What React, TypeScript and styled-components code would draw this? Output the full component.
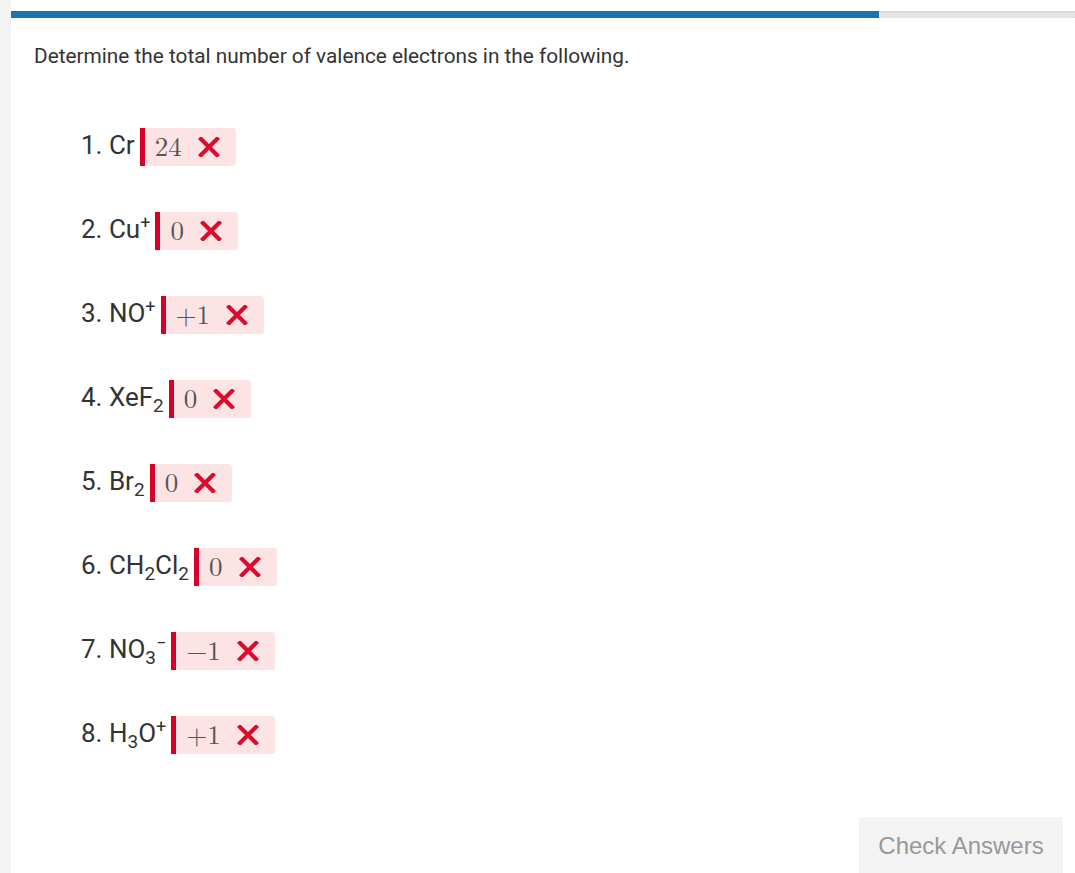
import React from 'react';
import styled, { createGlobalStyle } from 'styled-components';

const GlobalStyle = createGlobalStyle`
  html, body {
    margin: 0;
    padding: 0;
    background: #ffffff;
  }
  body {
    font-family: Roboto, 'Liberation Sans', Arial, sans-serif;
    color: #333333;
  }
`;

const Page = styled.div`
  display: flex;
  min-height: 873px;
  overflow: hidden;
`;

const SideStrip = styled.div`
  width: 11px;
  flex-shrink: 0;
  background: #f4f4f4;
`;

const Main = styled.div`
  flex: 1;
  padding-top: 11px;
  display: flex;
  flex-direction: column;
`;

const ProgressTrack = styled.div`
  height: 7px;
  background: #e6e6e6;
  box-shadow: inset 0 1px 2px rgba(0, 0, 0, 0.08);
  display: flex;
`;

const ProgressFill = styled.div`
  height: 100%;
  background: #1a75ae;
`;

const Content = styled.div`
  padding: 0 12px 0 23px;
  display: flex;
  flex-direction: column;
`;

const Prompt = styled.p`
  margin: 26px 0 0;
  font-size: 20.8px;
  line-height: 24px;
  color: #333333;
`;

const QuestionList = styled.ol`
  list-style: none;
  margin: 60px 0 0;
  padding: 0 0 0 47px;
  display: flex;
  flex-direction: column;
  gap: 46px;
`;

const Row = styled.li`
  display: flex;
  align-items: center;
  height: 38px;
`;

const Label = styled.span`
  font-size: 26px;
  line-height: 30px;
  color: #333333;
  margin-top: -5px;
  margin-right: 5px;

  sup {
    font-size: 18px;
    vertical-align: 9px;
    line-height: 0;
  }

  sub {
    font-size: 19px;
    vertical-align: -6px;
    line-height: 0;
  }
`;

const AnswerBox = styled.span`
  display: flex;
  align-items: center;
  height: 38px;
  background: #fce4e4;
  border-left: 5px solid #d6002a;
  border-radius: 0 3px 3px 0;
  padding: 0 16px 0 10px;
`;

const Value = styled.span`
  font-family: 'Latin Modern Math', 'Liberation Serif', 'Times New Roman', serif;
  font-size: 27px;
  line-height: 1;
  color: #555555;
  margin-right: 16px;
`;

const Cross = () => (
  <svg width="22" height="20" viewBox="0 0 22 20" aria-hidden="true">
    <path
      d="M3 2 L19 18 M19 2 L3 18"
      stroke="#dc0a2d"
      strokeWidth="4.2"
      strokeLinecap="square"
      fill="none"
    />
  </svg>
);

const Footer = styled.div`
  margin-top: 63px;
  display: flex;
  justify-content: flex-end;
`;

const CheckButton = styled.button`
  width: 204px;
  height: 60px;
  padding: 0 0 2px;
  border: none;
  border-radius: 3px;
  background: #f3f3f3;
  color: #999999;
  font-family: 'Liberation Sans', Arial, sans-serif;
  font-size: 24px;
  cursor: default;
`;

type Question = {
  label: React.ReactNode;
  value: string;
};

const questions: Question[] = [
  { label: <>1. Cr</>, value: '24' },
  { label: <>2. Cu<sup>+</sup></>, value: '0' },
  { label: <>3. NO<sup>+</sup></>, value: '+1' },
  { label: <>4. XeF<sub>2</sub></>, value: '0' },
  { label: <>5. Br<sub>2</sub></>, value: '0' },
  { label: <>6. CH<sub>2</sub>Cl<sub>2</sub></>, value: '0' },
  { label: <>7. NO<sub>3</sub><sup>−</sup></>, value: '−1' },
  { label: <>8. H<sub>3</sub>O<sup>+</sup></>, value: '+1' },
];

const progress = 81.6;

export default function App() {
  return (
    <>
      <GlobalStyle />
      <Page>
        <SideStrip />
        <Main>
          <ProgressTrack>
            <ProgressFill style={{ width: `${progress}%` }} />
          </ProgressTrack>
          <Content>
            <Prompt>Determine the total number of valence electrons in the following.</Prompt>
            <QuestionList>
              {questions.map((q, i) => (
                <Row key={i}>
                  <Label>{q.label}</Label>
                  <AnswerBox>
                    <Value>{q.value}</Value>
                    <Cross />
                  </AnswerBox>
                </Row>
              ))}
            </QuestionList>
            <Footer>
              <CheckButton>Check Answers</CheckButton>
            </Footer>
          </Content>
        </Main>
      </Page>
    </>
  );
}
